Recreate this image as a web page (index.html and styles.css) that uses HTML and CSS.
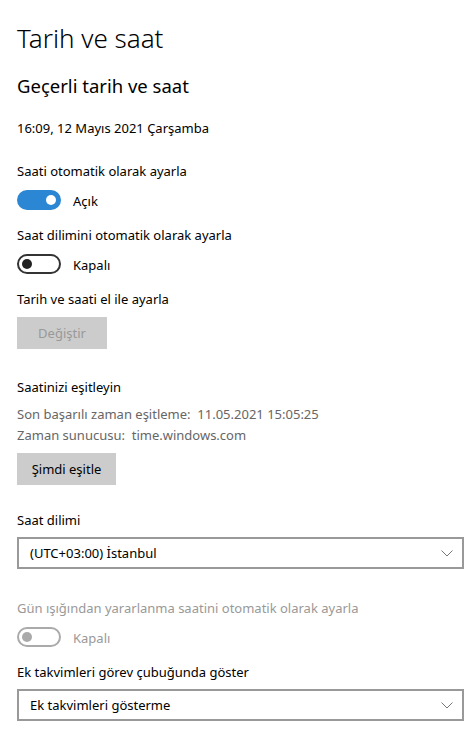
FILE: index.html
```html
<!DOCTYPE html>
<html lang="tr">
<head>
  <meta charset="UTF-8" />
  <meta name="viewport" content="width=device-width, initial-scale=1">
  <title>Tarih ve saat</title>
  <link rel="stylesheet" href="styles.css">
</head>
<body>

  <h1>Tarih ve saat</h1>
  <h2>Geçerli tarih ve saat</h2>
  <p class="date">16:09, 12 Mayıs 2021 Çarşamba</p>

  <p class="label first">Saati otomatik olarak ayarla</p>
  <div class="toggle-row">
    <span class="toggle on"></span>
    <span class="toggle-text">Açık</span>
  </div>

  <p class="label">Saat dilimini otomatik olarak ayarla</p>
  <div class="toggle-row">
    <span class="toggle off"></span>
    <span class="toggle-text">Kapalı</span>
  </div>

  <p class="label">Tarih ve saati el ile ayarla</p>
  <button class="btn btn-change" disabled>Değiştir</button>

  <p class="label sync-title">Saatinizi eşitleyin</p>
  <div class="sync-info">
    <p>Son başarılı zaman eşitleme:&nbsp; 11.05.2021 15:05:25</p>
    <p>Zaman sunucusu:&nbsp; time.windows.com</p>
  </div>
  <button class="btn btn-sync">Şimdi eşitle</button>

  <p class="label zone-title">Saat dilimi</p>
  <div class="select">
    <span>(UTC+03:00) İstanbul</span>
    <svg class="chevron" width="12" height="7" viewBox="0 0 12 7"><path d="M0.5 0.5 L6 6 L11.5 0.5" fill="none" stroke="#777" stroke-width="1"/></svg>
  </div>

  <p class="label dst-title disabled">Gün ışığından yararlanma saatini otomatik olarak ayarla</p>
  <div class="toggle-row dst">
    <span class="toggle off dim"></span>
    <span class="toggle-text disabled">Kapalı</span>
  </div>

  <p class="label">Ek takvimleri görev çubuğunda göster</p>
  <div class="select">
    <span>Ek takvimleri gösterme</span>
    <svg class="chevron" width="12" height="7" viewBox="0 0 12 7"><path d="M0.5 0.5 L6 6 L11.5 0.5" fill="none" stroke="#777" stroke-width="1"/></svg>
  </div>

</body>
</html>
```

FILE: styles.css
```css
body {
  font-family: "Noto Sans", "Open Sans", sans-serif;
  font-size: 13px;
  color: #000;
  background: #fff;
  margin: 0;
  padding: 0 5px 0 17px;
}
p {
  margin: 0;
}
h1 {
  font-size: 26px;
  font-weight: 300;
  line-height: 36px;
  margin: 20px 0 0;
}
h2 {
  font-size: 18.5px;
  font-weight: 400;
  line-height: 28px;
  margin: 16px 0 0;
}
.date {
  line-height: 20px;
  margin-top: 18px;
}
.label {
  line-height: 20px;
  margin-top: 15px;
}
.label.first {
  margin-top: 23px;
}
.label.sync-title {
  margin-top: 28px;
}
.label.zone-title {
  margin-top: 25px;
}
.label.dst-title {
  margin-top: 29px;
}
.disabled {
  color: #999;
}
.toggle-row {
  display: flex;
  align-items: center;
  gap: 12px;
  height: 20px;
  margin-top: 9px;
}
.toggle-row.dst {
  margin-top: 9px;
}
.toggle {
  box-sizing: border-box;
  width: 44px;
  height: 20px;
  border-radius: 10px;
  position: relative;
}
.toggle::after {
  content: "";
  position: absolute;
  top: 5px;
  width: 10px;
  height: 10px;
  border-radius: 50%;
}
.toggle.on {
  background: #2b86d3;
}
.toggle.on::after {
  right: 5px;
  background: #fff;
}
.toggle.off {
  border: 2px solid #333;
}
.toggle.off::after {
  top: 3px;
  left: 3px;
  background: #222;
}
.toggle.dim {
  border-color: #aaa;
}
.toggle.dim::after {
  background: #aaa;
}
.toggle-text {
  line-height: 20px;
  padding-top: 2px;
}
.btn {
  display: block;
  height: 32px;
  margin-top: 8px;
  padding: 0;
  border: none;
  background: #ccc;
  font-family: inherit;
  font-size: 13px;
  color: #000;
  white-space: nowrap;
}
.btn-change {
  width: 90px;
  color: #999;
}
.btn-sync {
  width: 99px;
  margin-top: 7px;
}
.sync-info {
  margin-top: 7px;
  color: #666;
  line-height: 21px;
}
.select {
  box-sizing: border-box;
  display: flex;
  align-items: center;
  justify-content: space-between;
  width: 447px;
  height: 32px;
  margin-top: 7px;
  padding: 0 9px 0 11px;
  border: 2px solid #999;
}
.chevron {
  display: block;
}
```
